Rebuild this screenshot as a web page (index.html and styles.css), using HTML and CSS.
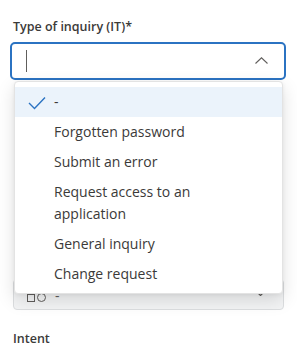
FILE: index.html
```html
<!DOCTYPE html>
<html lang="en">
<head>
  <meta charset="UTF-8">
  <meta name="viewport" content="width=device-width, initial-scale=1.0">
  <title>Inquiry</title>
  <link rel="stylesheet" href="styles.css">
</head>
<body>

  <div class="container">
      <div class="form-group select-group">
          <label for="inquiry">Type of inquiry (IT)*</label>
          <div class="combo focused" id="inquiry">
              <span class="caret"></span>
              <svg class="chevron" width="13" height="7" viewBox="0 0 13 7"><path d="M0.5 6.5 L6.5 0.8 L12.5 6.5" fill="none" stroke="#605e5c" stroke-width="1.1"/></svg>
          </div>

          <ul class="dropdown">
              <li class="option selected">
                  <svg class="check" width="18" height="14" viewBox="0 0 18 14"><path d="M1 7 L6.5 12.5 L17 1.5" fill="none" stroke="#2b73c2" stroke-width="1.4"/></svg>
                  <span>-</span>
              </li>
              <li class="option"><span>Forgotten password</span></li>
              <li class="option"><span>Submit an error</span></li>
              <li class="option"><span>Request access to an application</span></li>
              <li class="option"><span>General inquiry</span></li>
              <li class="option"><span>Change request</span></li>
          </ul>
      </div>

      <div class="form-group">
          <div class="combo disabled">
              <span class="shapes"><i class="sq"></i><i class="ci"></i></span>
              <span class="value">-</span>
              <svg class="chevron-down" width="9" height="5" viewBox="0 0 9 5"><path d="M0.5 0.5 L4.5 4.5 L8.5 0.5" fill="none" stroke="#605e5c" stroke-width="1.2"/></svg>
          </div>
      </div>

      <div class="form-group">
          <label>Intent</label>
      </div>
  </div>

</body>
</html>
```

FILE: styles.css
```css
body {
  font-family: "Open Sans", "Noto Sans", Arial, sans-serif;
  background-color: #ffffff;
  color: #323130;
  margin: 0;
  padding: 0;
}

.container {
  padding: 18px 13px 0 13px;
}

.form-group {
  display: flex;
  flex-direction: column;
}

.select-group {
  position: relative;
}

label {
  font-size: 12.5px;
  font-weight: 600;
  line-height: 18px;
  margin-bottom: 6px;
  color: #3b3a39;
}

.combo {
  display: flex;
  align-items: center;
  box-sizing: border-box;
  border-radius: 4px;
}

.combo.focused {
  margin: 0 -2px 0 -3px;
  height: 38px;
  border: 2px solid #2b73c2;
  border-radius: 5px;
  padding: 0 16px 0 14px;
  justify-content: space-between;
}

.caret {
  width: 1px;
  height: 22px;
  background: #605e5c;
}

.chevron {
  margin-top: -1px;
}

.dropdown {
  position: absolute;
  top: 63px;
  left: 1px;
  width: 269px;
  box-sizing: border-box;
  margin: 0;
  padding: 5px 0 4px 0;
  list-style: none;
  background: #ffffff;
  border: 1px solid #e3e3e3;
  border-radius: 4px;
  box-shadow: 0 6px 18px rgba(0, 0, 0, 0.13), 0 1px 4px rgba(0, 0, 0, 0.06);
  z-index: 2;
}

.option {
  display: flex;
  align-items: center;
  padding: 4px 50px 4px 39px;
  min-height: 22px;
  font-size: 14px;
  line-height: 22px;
  color: #3b3a39;
  position: relative;
}

.option.selected {
  background: #ebf3fb;
}

.check {
  position: absolute;
  left: 13px;
  top: 9px;
}

.combo.disabled {
  margin-top: 199px;
  height: 31px;
  background: #f3f4f5;
  border: 1px solid #dcdee0;
  padding: 0 18px 0 13px;
  font-size: 14px;
  color: #605e5c;
}

.shapes {
  display: flex;
  align-items: center;
  gap: 2px;
  margin-top: 6px;
}

.shapes i {
  display: block;
  width: 6px;
  height: 6px;
  border: 1px solid #605e5c;
}

.shapes .ci {
  width: 7px;
  height: 7px;
  border-radius: 50%;
}

.value {
  margin-left: 9px;
  margin-top: 2px;
}

.chevron-down {
  margin-left: auto;
  margin-top: -2px;
}

.form-group:last-child {
  margin-top: 20px;
}
```
